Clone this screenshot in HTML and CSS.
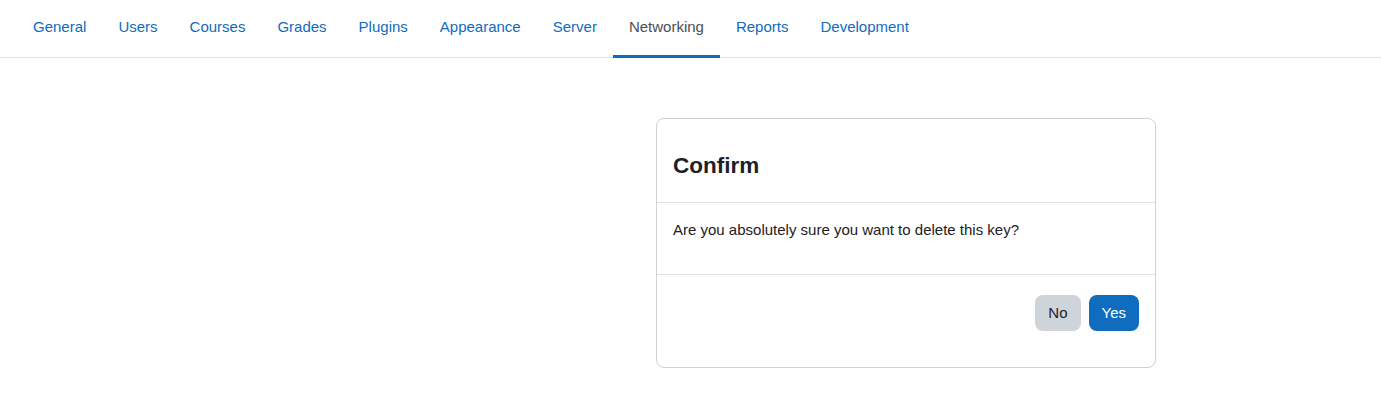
FILE: index.html
```
<!DOCTYPE html>
<html lang="en">
<head>
	<meta charset="UTF-8" />
	<title>Networking - Confirm</title>
	<link rel="stylesheet" href="styles.css">
</head>
<body>
	<!-- Secondary navigation -->
	<nav class="secondary-nav">
		<ul class="nav-tabs">
			<li><a class="nav-link" href="#">General</a></li>
			<li><a class="nav-link" href="#">Users</a></li>
			<li><a class="nav-link" href="#">Courses</a></li>
			<li><a class="nav-link" href="#">Grades</a></li>
			<li><a class="nav-link" href="#">Plugins</a></li>
			<li><a class="nav-link" href="#">Appearance</a></li>
			<li><a class="nav-link" href="#">Server</a></li>
			<li><a class="nav-link active" href="#">Networking</a></li>
			<li><a class="nav-link" href="#">Reports</a></li>
			<li><a class="nav-link" href="#">Development</a></li>
		</ul>
	</nav>
	<!-- End of Secondary navigation -->

	<!-- Confirm box -->
	<main class="page">
		<section class="confirm-card">
			<div class="card-header">
				<h4>Confirm</h4>
			</div>
			<div class="card-body">
				<p>Are you absolutely sure you want to delete this key?</p>
			</div>
			<div class="card-footer">
				<button class="btn btn-secondary">No</button>
				<button class="btn btn-primary">Yes</button>
			</div>
		</section>
	</main>
	<!-- End of Confirm box -->
</body>
</html>
```

FILE: styles.css
```
/* Variables */
:root {
	--primary: #0f6cbf;
	--dark: #1d2125;
	--muted: #495057;
	--border: #dee2e6;
	--card-border: #cfd1d4;
	--secondary: #ced4da;
}
/* End of Variables */

* {
	margin: 0;
	padding: 0;
	box-sizing: border-box;
}

body {
	background: #fff;
	color: var(--dark);
	font-family: "Liberation Sans", Arial, sans-serif;
	font-size: 15px;
	line-height: 1.5;
}

/* Navigation */
.secondary-nav .nav-tabs {
	display: flex;
	list-style: none;
	padding-left: 17px;
	border-bottom: 1px solid var(--border);
}

.nav-tabs li {
	margin-bottom: -1px;
}

.nav-tabs .nav-link {
	display: block;
	padding: 16px 16px 17px;
	line-height: 22px;
	color: var(--primary);
	text-decoration: none;
	border-bottom: 3px solid transparent;
}

.nav-tabs .nav-link.active {
	color: var(--muted);
	border-bottom-color: var(--primary);
}

/* Page */
.page {
	padding: 60px 0 0 656px;
}

.confirm-card {
	width: 500px;
	border: 1px solid var(--card-border);
	border-radius: 8px;
	background: #fff;
}

.card-header {
	padding: 33px 16px 23px;
	border-bottom: 1px solid var(--border);
}

.card-header h4 {
	font-size: 22.5px;
	font-weight: 700;
	line-height: 27px;
}

.card-body {
	padding: 16px;
	border-bottom: 1px solid var(--border);
}

.card-body p {
	margin-bottom: 16px;
}

.card-footer {
	display: flex;
	justify-content: flex-end;
	gap: 8px;
	padding: 20px 16px 36px;
}

.btn {
	font-family: inherit;
	font-size: 15px;
	line-height: 22px;
	padding: 6px 12px;
	border: 1px solid transparent;
	border-radius: 8px;
	cursor: pointer;
}

.btn-secondary {
	background: var(--secondary);
	color: var(--dark);
}

.btn-primary {
	background: var(--primary);
	color: #fff;
}
```
